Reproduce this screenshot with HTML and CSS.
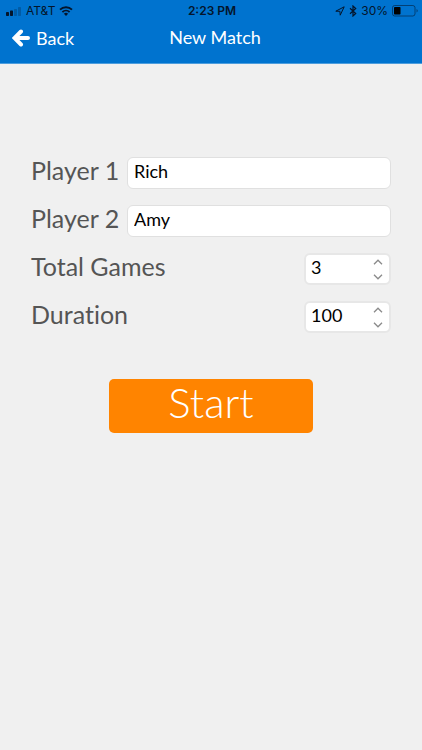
FILE: index.html
```
<!DOCTYPE html>
<html lang="en">
<head>
<meta charset="utf-8">
<meta name="viewport" content="width=device-width, initial-scale=1">
<title>New Match</title>
<link rel="stylesheet" href="styles.css">
</head>
<body>
<header class="top">
  <div class="status">
    <div class="status-left">
      <svg class="signal" width="16" height="9" viewBox="0 0 16 9"><rect x="0" y="5" width="3" height="4" rx=".7"/><rect x="4" y="3.500" width="3" height="5.500" rx=".7"/><g opacity=".25"><rect x="8" y="2" width="3" height="7" rx=".7"/><rect x="12" y="0" width="3" height="9" rx=".7"/></g></svg>
      <span>AT&amp;T</span>
      <svg class="wifi" width="14" height="10" viewBox="0 0 14 10"><path d="M7 10 4.900 7.800a3 3 0 0 1 4.200 0z"/><path d="M3.400 6.100a5.200 5.200 0 0 1 7.200 0M1 3.600a8.700 8.700 0 0 1 12 0" fill="none" stroke="#04152b" stroke-width="1.900"/></svg>
    </div>
    <span class="clock">2:23 PM</span>
    <div class="status-right">
      <svg width="10" height="10" viewBox="0 0 10 10"><path d="M.8 5.200 9.200.8 5.200 9.200 4.900 5.300z" fill="none" stroke="#04152b" stroke-linejoin="round"/></svg>
      <svg class="bluetooth" width="8" height="12" viewBox="0 0 8 12"><path d="M1 3.300 6.700 8.500 4 11V1l2.700 2.500L1 8.700" fill="none" stroke="#04152b" stroke-width="1.200"/></svg>
      <span>30%</span>
      <svg width="26" height="12" viewBox="0 0 26 12"><rect x=".5" y=".5" width="22.500" height="10.500" rx="2.200" fill="none" stroke="#04152b" stroke-opacity=".55"/><rect x="2" y="2" width="6.500" height="7.500" rx=".8" fill="#000"/><path d="M24.500 4v3.600q1.300-.5 1.300-1.800T24.500 4z" opacity=".5"/></svg>
    </div>
  </div>
  <nav class="bar">
    <a class="back" href="#"><svg width="18" height="18" viewBox="0 0 18 18"><path d="M16 9H4M9 2.500 2.500 9 9 15.500" fill="none" stroke="#fff" stroke-width="4" stroke-linecap="round"/></svg>Back</a>
    <h1 class="title">New Match</h1>
  </nav>
</header>
<main>
  <form class="form">
    <div class="row"><label for="p1">Player 1</label><input class="text" id="p1" type="text" value="Rich"></div>
    <div class="row"><label for="p2">Player 2</label><input class="text" id="p2" type="text" value="Amy"></div>
    <div class="row"><label for="games">Total Games</label>
      <div class="spinner"><input id="games" type="number" value="3">
        <div class="steps">
          <button type="button" aria-label="More games"><svg width="10" height="6" viewBox="0 0 10 6"><path d="M1 5.200 5 1.200l4 4"/></svg></button>
          <button type="button" aria-label="Fewer games"><svg width="10" height="6" viewBox="0 0 10 6"><path d="M1 .8l4 4 4-4"/></svg></button>
        </div></div></div>
    <div class="row"><label for="duration">Duration</label>
      <div class="spinner"><input id="duration" type="number" value="100">
        <div class="steps">
          <button type="button" aria-label="Longer"><svg width="10" height="6" viewBox="0 0 10 6"><path d="M1 5.200 5 1.200l4 4"/></svg></button>
          <button type="button" aria-label="Shorter"><svg width="10" height="6" viewBox="0 0 10 6"><path d="M1 .8l4 4 4-4"/></svg></button>
        </div></div></div>
    <button class="start" type="submit">Start</button>
  </form>
</main>
</body>
</html>
```
FILE: styles.css
```
* { box-sizing: border-box; }
body {
  margin: 0;
  min-height: 100vh;
  background: #f0f0f0;
  color: #555;
  font-family: Lato, "Liberation Sans", sans-serif;
  font-variant-ligatures: none;
}
.top {
  height: 64px;
  background: #0073cf;
  border-bottom: 1px solid #4d9ddd;
}
.status {
  display: grid;
  grid-template-columns: 1fr auto 1fr;
  align-items: center;
  height: 22px;
  padding: 0 4px 0 6px;
  color: #04152b;
  fill: #04152b;
  font: 12px/22px Inter, "Liberation Sans", sans-serif;
}
.status-left, .status-right {
  display: flex;
  align-items: center;
  gap: 4px;
}
.clock { font-weight: 600; }
.status-right { justify-content: flex-end; }
.bar {
  display: grid;
  grid-template-columns: 1fr auto 1fr;
  align-items: center;
  height: 32px;
  padding: 0 4px 0 12px;
  color: #fff;
}
.back {
  display: flex;
  align-items: center;
  gap: 6px;
  color: #fff;
  font-size: 18px;
  line-height: 22px;
  text-decoration: none;
}
.title {
  margin: 0;
  padding-bottom: 2px;
  font-size: 18px;
  line-height: 22px;
  font-weight: 400;
}
.form {
  display: flex;
  flex-direction: column;
  gap: 16px;
  padding: 93px 31px 0;
}
.row {
  display: flex;
  align-items: center;
  justify-content: space-between;
  height: 32px;
}
label {
  min-width: 96px;
  padding-bottom: 6px;
  font-size: 25px;
  line-height: 26px;
  white-space: nowrap;
}
input {
  min-width: 0;
  border: 0;
  outline: 0;
  background: transparent;
  color: #000;
  font: 18px/24px Lato, "Liberation Sans", sans-serif;
  appearance: textfield;
}
input::-webkit-inner-spin-button { display: none; }
.text {
  flex: 1;
  height: 32px;
  padding: 0 6px 5px;
  border: 1px solid #e0e0e0;
  border-radius: 6px;
  background: #fff;
}
.spinner {
  display: flex;
  width: 87px;
  height: 32px;
  border: 2px solid #e7e7e7;
  border-radius: 6px;
  background: #fff;
}
.spinner input {
  flex: 1;
  padding: 0 0 5px 5px;
}
.steps {
  display: flex;
  flex-direction: column;
  justify-content: space-between;
  width: 16px;
  padding: 2px 0 1px;
}
.steps button {
  display: flex;
  align-items: center;
  height: 10px;
  padding: 0;
  border: 0;
  background: none;
}
.steps path { fill: none; stroke: #8a8a8a; stroke-width: 1.3; }
.start {
  align-self: center;
  width: 204px;
  height: 54px;
  margin-top: 30px;
  padding: 0 0 8px;
  border: 0;
  border-radius: 5px;
  background: #ff8400;
  color: #fff;
  font: 300 42px/46px Lato, "Liberation Sans", sans-serif;
}
```
